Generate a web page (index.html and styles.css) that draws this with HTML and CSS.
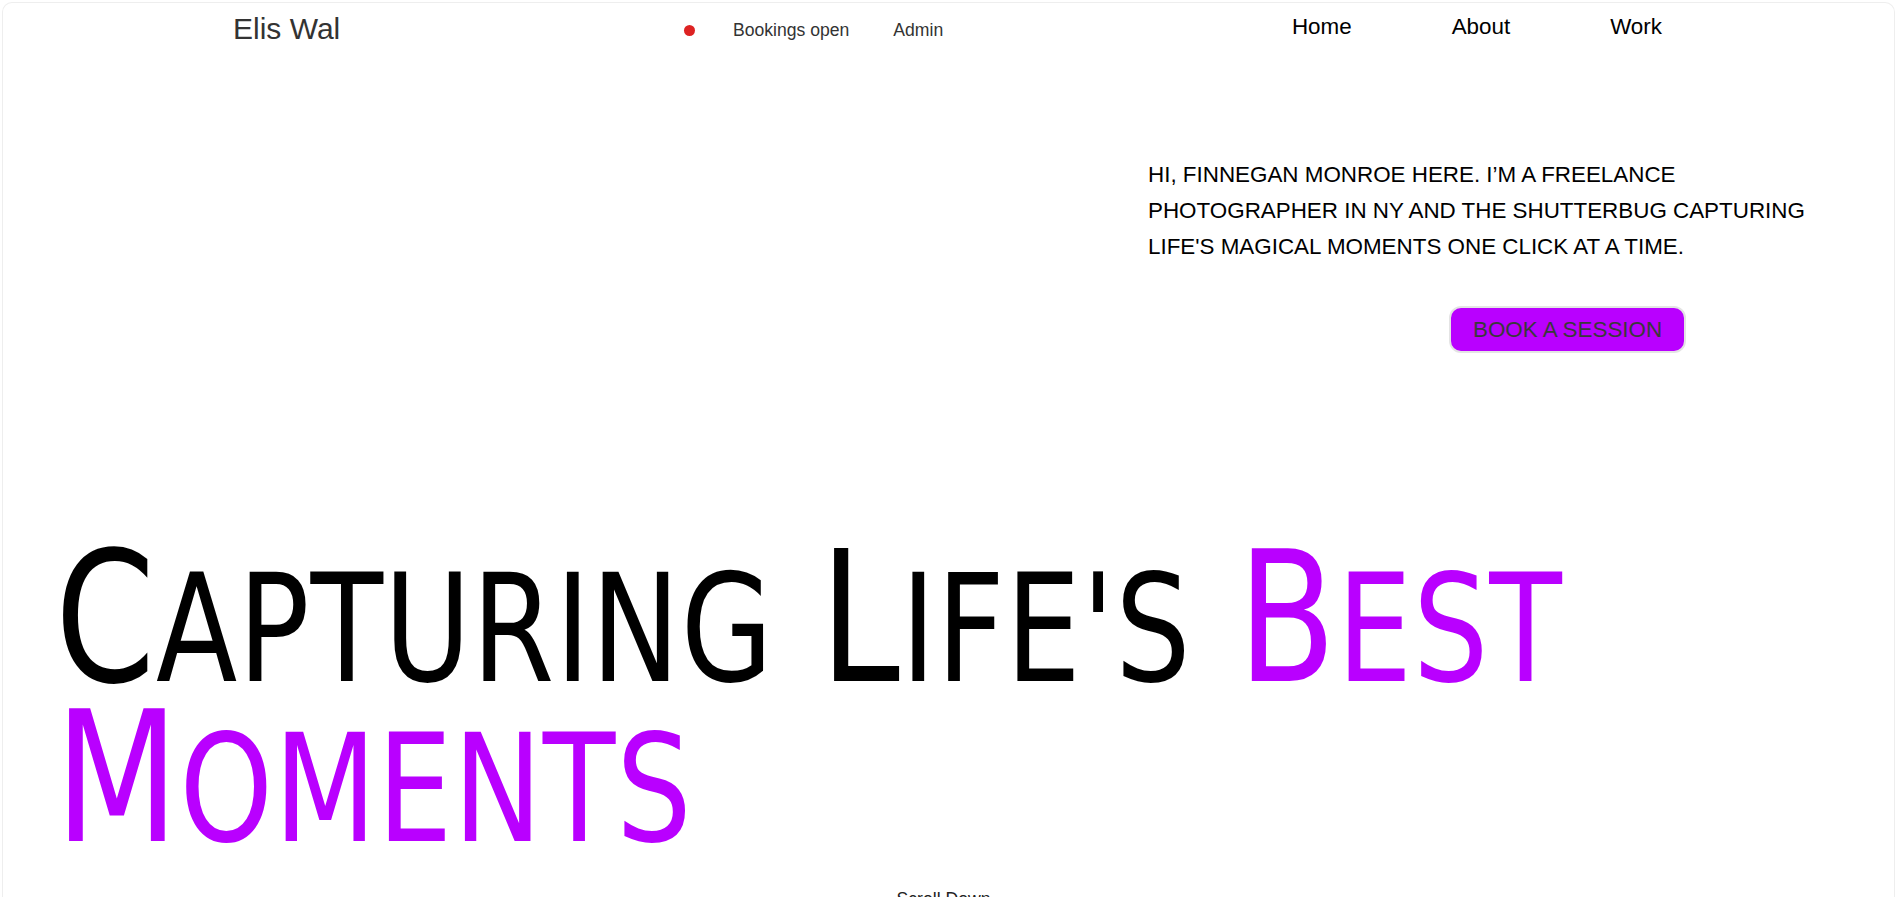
FILE: index.html
```html
<!DOCTYPE html>
<html lang="en">
<head>
<meta charset="utf-8">
<title>Elis Wal</title>
<link rel="stylesheet" href="styles.css">
</head>
<body>
<div class="page">
  <header class="bar">
    <div class="logo">Elis Wal</div>
    <div class="status">
      <span class="dot"></span>
      <a class="meta-link" href="#">Bookings open</a>
      <a class="meta-link admin" href="#">Admin</a>
    </div>
    <nav class="nav">
      <a href="#">Home</a>
      <a href="#">About</a>
      <a href="#">Work</a>
    </nav>
  </header>

  <section class="intro">
    <p>Hi, Finnegan Monroe here. I’m a freelance photographer in NY and the shutterbug capturing life's magical moments one click at a time.</p>
    <button class="cta">Book a session</button>
  </section>

  <h1 class="headline"><span class="lg">C</span><span class="sm">apturing</span> <span class="lg">L</span><span class="sm">ife's</span> <span class="accent"><span class="lg">B</span><span class="sm">est</span></span><br><span class="accent"><span class="lg">M</span><span class="sm">oments</span></span></h1>

  <div class="scroll">Scroll Down</div>
</div>
</body>
</html>
```

FILE: styles.css
```css
* { box-sizing: border-box; }

html, body {
  margin: 0;
  padding: 0;
  background: #ffffff;
  overflow: hidden;
}

body {
  font-family: "Liberation Sans", Arial, sans-serif;
  color: #000;
}

.page {
  margin: 2px 2px 0 2px;
  height: 895px;
  border: 1px solid #eeeeee;
  border-bottom: 0;
  border-radius: 10px 10px 0 0;
  overflow: hidden;
}

.bar {
  max-width: 1431px;
  margin: 0 auto;
  height: 56px;
  padding-top: 1px;
  padding-bottom: 6px;
  display: flex;
  justify-content: space-between;
  align-items: center;
}

.logo {
  font-size: 30px;
  color: #333;
  line-height: 36px;
}

.status {
  display: flex;
  align-items: center;
  padding-top: 3px;
  margin-left: -5px;
}

.dot {
  width: 11px;
  height: 11px;
  border-radius: 50%;
  background: #dd2222;
  margin-right: 38px;
}

.meta-link {
  font-size: 17.6px;
  color: #333;
  text-decoration: none;
}

.admin { margin-left: 44px; }

.nav {
  display: flex;
  gap: 100px;
  margin-top: -4px;
  margin-right: 2px;
}

.nav a {
  font-size: 22.4px;
  color: #000;
  text-decoration: none;
}

.intro {
  margin-left: 1145px;
  margin-top: 98px;
  width: 720px;
}

.intro p {
  margin: 0;
  font-size: 22.4px;
  line-height: 36px;
  text-transform: uppercase;
}

.cta {
  margin-top: 41px;
  margin-left: 301px;
  font-family: "Liberation Sans", Arial, sans-serif;
  font-size: 22.4px;
  line-height: 27px;
  padding: 8px 22px;
  background: #b900ff;
  color: #3a3a3a;
  border: 2px solid #e4e4e4;
  border-radius: 12px;
  text-transform: uppercase;
}

.headline {
  margin: 186px 0 0 52px;
  font-family: "DejaVu Sans Condensed", "DejaVu Sans", sans-serif;
  font-weight: 400;
  font-size: 181px;
  line-height: 160px;
  letter-spacing: 1px;
  white-space: nowrap;
  transform: scaleX(0.88);
  transform-origin: left center;
}

.headline .sm {
  font-size: 150px;
  text-transform: uppercase;
  line-height: 0;
}

.accent { color: #b900ff; }

.scroll {
  margin-top: 30px;
  text-align: center;
  font-size: 17.6px;
  color: #222;
  padding-right: 10px;
}
```
